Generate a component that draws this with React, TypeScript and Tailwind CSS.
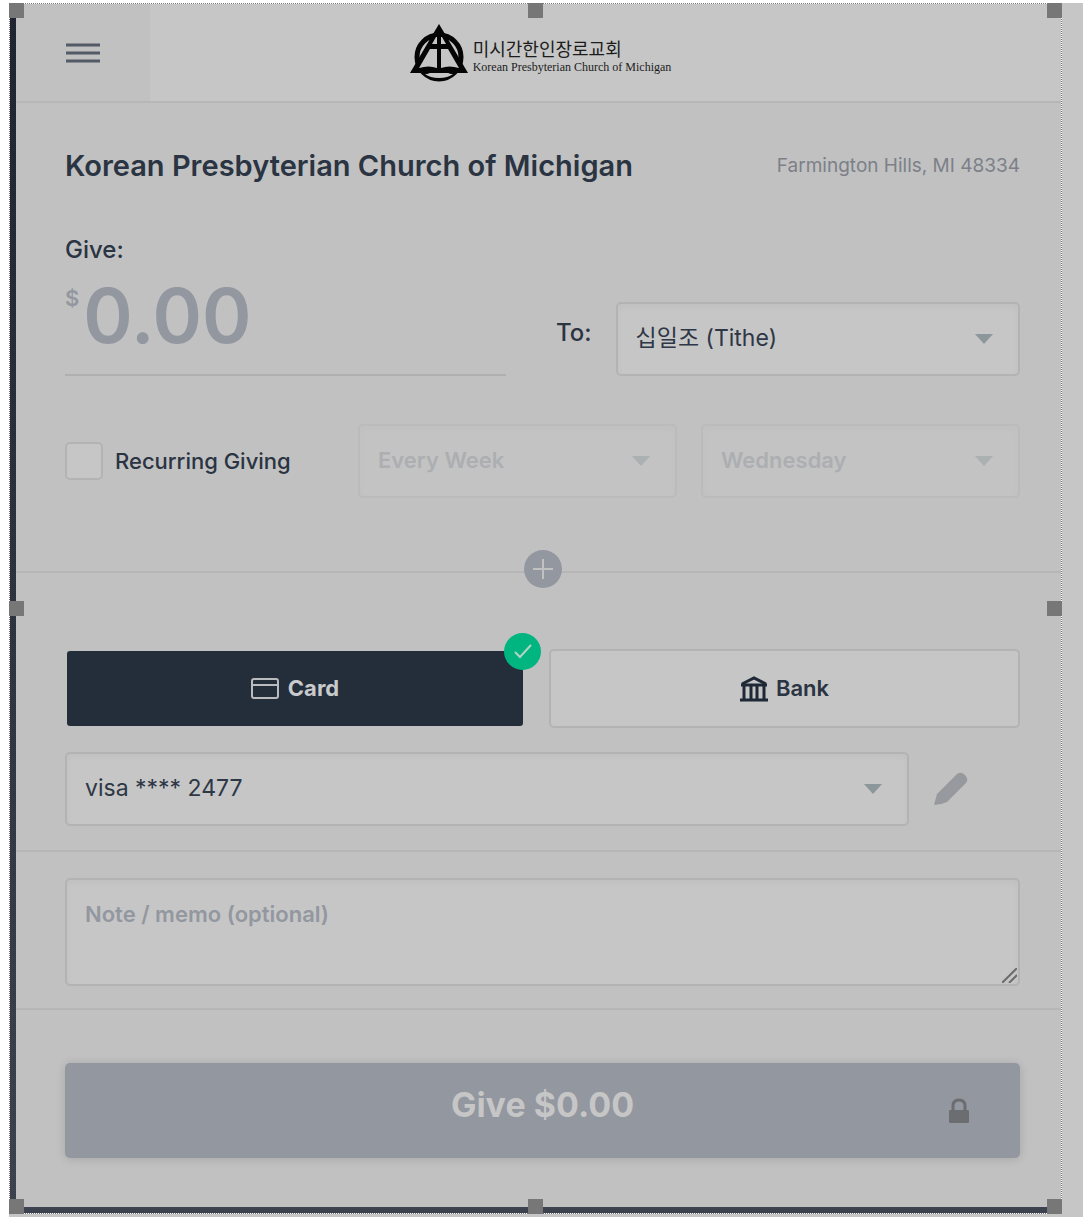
import { useState } from 'react';
import type { ReactNode, SelectHTMLAttributes } from 'react';

const HANDLES = [
  '-left-px -top-px',
  'left-[518px] -top-px',
  '-right-px -top-px',
  '-left-px top-[597px]',
  '-right-px top-[597px]',
  '-left-px -bottom-px',
  'left-[518px] -bottom-px',
  '-right-px -bottom-px',
];

const fieldClass =
  'w-full appearance-none rounded-[5px] border-2 border-[#b3b3b3] bg-[#c6c6c6] px-[18px] text-[#2e3745] shadow-[inset_0_3px_6px_rgba(0,0,0,0.03)] outline-none';

function Logo() {
  return (
    <a href="#" className="flex items-center gap-[5px] text-[#1c1c1c]">
      <svg width="58" height="58" viewBox="0 0 58 58" aria-hidden="true">
        <circle cx="29" cy="33" r="22" fill="none" stroke="#050505" strokeWidth="5" />
        <path d="M29 0 L35 10 L58 49 H0 L23 10 Z" fill="#050505" />
        <path d="M26 13 L22 20 H27 V13 Z M32 13 L36 20 H31 V13 Z" fill="#c6c6c6" />
        <path d="M20 25 H27 V44 Q19 41 9 44 Z M38 25 H31 V44 Q39 41 49 44 Z" fill="#c6c6c6" />
        <path d="M15 50 Q24 49 29 51 Q34 49 43 50 Q38 54 29 54 Q20 54 15 50 Z" fill="#c6c6c6" />
      </svg>
      <span className="flex flex-col pt-2">
        <span className="font-['Noto_Sans_CJK_KR',sans-serif] text-[18px] leading-[20px]">미시간한인장로교회</span>
        <span className="font-['Liberation_Serif',serif] text-[12px] leading-[18px]">
          Korean Presbyterian Church of Michigan
        </span>
      </span>
    </a>
  );
}

type SelectProps = SelectHTMLAttributes<HTMLSelectElement> & { children: ReactNode };

function Select({ children, ...props }: SelectProps) {
  return (
    <div className={props.disabled ? 'relative flex-1 opacity-40' : 'relative flex-1'}>
      <select
        {...props}
        className={`${fieldClass} h-[74px] pb-0.5 text-[23px] disabled:text-[22px] disabled:font-semibold disabled:text-[#8f949c]`}
      >
        {children}
      </select>
      <svg
        className="pointer-events-none absolute right-[27px] top-[32px]"
        width="18"
        height="10"
        viewBox="0 0 18 10"
        fill="#8c979b"
        aria-hidden="true"
      >
        <path d="M0 0 H18 L9 10 Z" />
      </svg>
    </div>
  );
}

export default function App() {
  const [recurring, setRecurring] = useState(false);

  return (
    <div className="min-h-screen bg-white pl-[9px] pt-[3px] font-['Inter','Noto_Sans_CJK_KR',sans-serif] text-[#2a3442]">
      <div className="bg-[#c6c6c6] pb-[3px] pr-[21px]">
        <div className="relative border border-dotted border-[#777777] bg-white">
          <div className="bg-linear-to-b from-[#1f2430] to-[#3c424e] pb-[6px] pl-[6px]">
            <main className="bg-[#c1c1c1]">
              <header className="relative flex h-[99px] items-center justify-center border-b-2 border-[#b7b7b7] bg-[#c6c6c6] pl-1">
                <button
                  type="button"
                  aria-label="Menu"
                  className="absolute inset-y-0 left-0 flex w-[134px] items-center justify-center bg-[#c1c1c1]"
                >
                  <svg width="34" height="20" viewBox="0 0 34 20" stroke="#535b67" strokeWidth="3" aria-hidden="true">
                    <path d="M0 2 H34 M0 10 H34 M0 18 H34" />
                  </svg>
                </button>
                <Logo />
              </header>

              <section className="relative border-b-2 border-[#b6b6b6] pb-[73px] pl-[49px] pr-[41px] pt-[45px]">
                <div className="flex items-center justify-between">
                  <h1 className="text-[29px] font-semibold leading-[36px]">Korean Presbyterian Church of Michigan</h1>
                  <p className="text-[19px] text-[#7c8088]">Farmington Hills, MI 48334</p>
                </div>

                <div className="mt-[50px] flex items-end">
                  <div className="w-[441px]">
                    <label htmlFor="amount" className="block text-[24px] font-medium leading-[32px]">
                      Give:
                    </label>
                    <div className="flex border-b-2 border-[#b0b0b0] pb-2 text-[#9397a0]">
                      <span className="pt-4 text-[22px] font-semibold leading-[32px]">$</span>
                      <input
                        id="amount"
                        placeholder="0.00"
                        className="ml-1 h-[100px] w-full min-w-0 bg-transparent text-[75px] font-semibold outline-none placeholder:text-[#9397a0]"
                      />
                    </div>
                  </div>
                  <div className="ml-[50px] flex flex-1 items-center">
                    <label htmlFor="fund" className="mr-6 pb-3 text-[24px] font-medium">
                      To:
                    </label>
                    <Select id="fund">
                      <option>십일조 (Tithe)</option>
                    </Select>
                  </div>
                </div>

                <div className="mt-12 flex items-center">
                  <label className="flex w-[293px] items-center gap-3 text-[22px] font-medium">
                    <input
                      type="checkbox"
                      checked={recurring}
                      onChange={(e) => setRecurring(e.target.checked)}
                      className="size-[38px] appearance-none rounded-[5px] border-2 border-[#b3b3b3] bg-[#c6c6c6] checked:bg-[#00b57f]"
                    />
                    Recurring Giving
                  </label>
                  <div className="flex flex-1 gap-6">
                    <Select aria-label="Frequency" disabled={!recurring}>
                      <option>Every Week</option>
                    </Select>
                    <Select aria-label="Day" disabled={!recurring}>
                      <option>Wednesday</option>
                    </Select>
                  </div>
                </div>

                <div className="absolute inset-x-0 -bottom-[17px] flex justify-center pl-[49px] pr-[41px]">
                  <button
                    type="button"
                    aria-label="Add another gift"
                    className="flex size-[38px] items-center justify-center rounded-full bg-[#9397a0]"
                  >
                    <svg width="20" height="20" viewBox="0 0 20 20" stroke="#c1c1c1" strokeWidth="2" aria-hidden="true">
                      <path d="M0 10 H20 M10 0 V20" />
                    </svg>
                  </button>
                </div>
              </section>

              <section className="border-b-2 border-[#b6b6b6] pb-6 pl-[49px] pr-[41px] pt-[76px]">
                <div className="grid grid-cols-[460fr_471fr] items-center gap-6 text-[22px] font-semibold">
                  <div className="relative px-0.5">
                    <button
                      type="button"
                      className="flex h-[75px] w-full items-center justify-center gap-[9px] rounded-[3px] bg-[#242d3a] font-bold text-[#c9cacc]"
                    >
                      <svg width="28" height="21" viewBox="0 0 28 21" fill="none" stroke="#b9bbbe" strokeWidth="2" aria-hidden="true">
                        <rect x="1" y="1" width="26" height="19" rx="2" />
                        <path d="M1 7 H27" />
                      </svg>
                      Card
                    </button>
                    <span className="absolute -right-4 -top-[18px] flex size-[37px] items-center justify-center rounded-full bg-[#00b57f]">
                      <svg width="18" height="15" viewBox="0 0 18 15" fill="none" stroke="#b4d3c6" strokeWidth="2" aria-hidden="true">
                        <path d="M1 8 L6 13 L17 1" />
                      </svg>
                    </span>
                  </div>
                  <button
                    type="button"
                    className="flex h-[79px] items-center justify-center gap-2 rounded-[5px] border-2 border-[#b3b3b3] bg-[#c6c6c6]"
                  >
                    <svg width="28" height="26" viewBox="0 0 28 26" fill="none" stroke="#1f2836" strokeWidth="2" aria-hidden="true">
                      <path d="M2 8 L14 2 L26 8" strokeWidth="3" />
                      <path d="M1 9 H27" strokeWidth="3" />
                      <path d="M4 10 V23 M11 10 V23 M17 10 V23 M24 10 V23" strokeWidth="3" />
                      <path d="M0 24 H28" strokeWidth="3" />
                    </svg>
                    Bank
                  </button>
                </div>
                <div className="mt-6 flex items-center">
                  <Select aria-label="Saved card">
                    <option>visa **** 2477</option>
                  </Select>
                  <button type="button" aria-label="Edit card" className="ml-6 mr-[52px]">
                    <svg width="35" height="34" viewBox="0 0 35 34" fill="#97999e" aria-hidden="true">
                      <path d="M1 33 L4 22 L24 2 Q28 -1 32 3 Q36 7 33 11 L14 30 Q8 33 1 33 Z" />
                    </svg>
                  </button>
                </div>
              </section>

              <section className="border-b-2 border-[#b6b6b6] pb-[22px] pl-[49px] pr-[41px] pt-[26px]">
                <div className="relative">
                  <textarea
                    aria-label="Note / memo"
                    placeholder="Note / memo (optional)"
                    className={`${fieldClass} block h-[108px] resize-none py-[18px] text-[22px] font-semibold leading-[32px] placeholder:text-[#9397a0]`}
                  />
                  <svg
                    className="pointer-events-none absolute bottom-[3px] right-[3px]"
                    width="15"
                    height="15"
                    viewBox="0 0 15 15"
                    stroke="#6b6b6b"
                    strokeWidth="2"
                    aria-hidden="true"
                  >
                    <path d="M0 15 L15 0 M7 15 L15 7" />
                  </svg>
                </div>
              </section>

              <section className="pb-[49px] pl-[49px] pr-[41px] pt-[53px]">
                <button
                  type="submit"
                  className="relative flex h-[95px] w-full items-center justify-center rounded-[5px] bg-[#9397a0] pb-3 text-[34px] font-bold text-[#c6c6c6] shadow-[0_1px_10px_rgba(0,0,0,0.14)]"
                >
                  Give $0.00
                  <svg
                    className="absolute right-[50px] top-[35px]"
                    width="22"
                    height="25"
                    viewBox="0 0 22 25"
                    fill="none"
                    stroke="#6b6d71"
                    strokeWidth="3"
                    aria-hidden="true"
                  >
                    <path d="M5 13 V8 Q5 2 11 2 Q17 2 17 8 V13" />
                    <rect x="1" y="12" width="20" height="13" rx="1" fill="#6b6d71" stroke="none" />
                  </svg>
                </button>
              </section>
            </main>
          </div>

          {HANDLES.map((position) => (
            <span key={position} className={`absolute size-[15px] bg-[#777777] ${position}`} />
          ))}
        </div>
      </div>
    </div>
  );
}
